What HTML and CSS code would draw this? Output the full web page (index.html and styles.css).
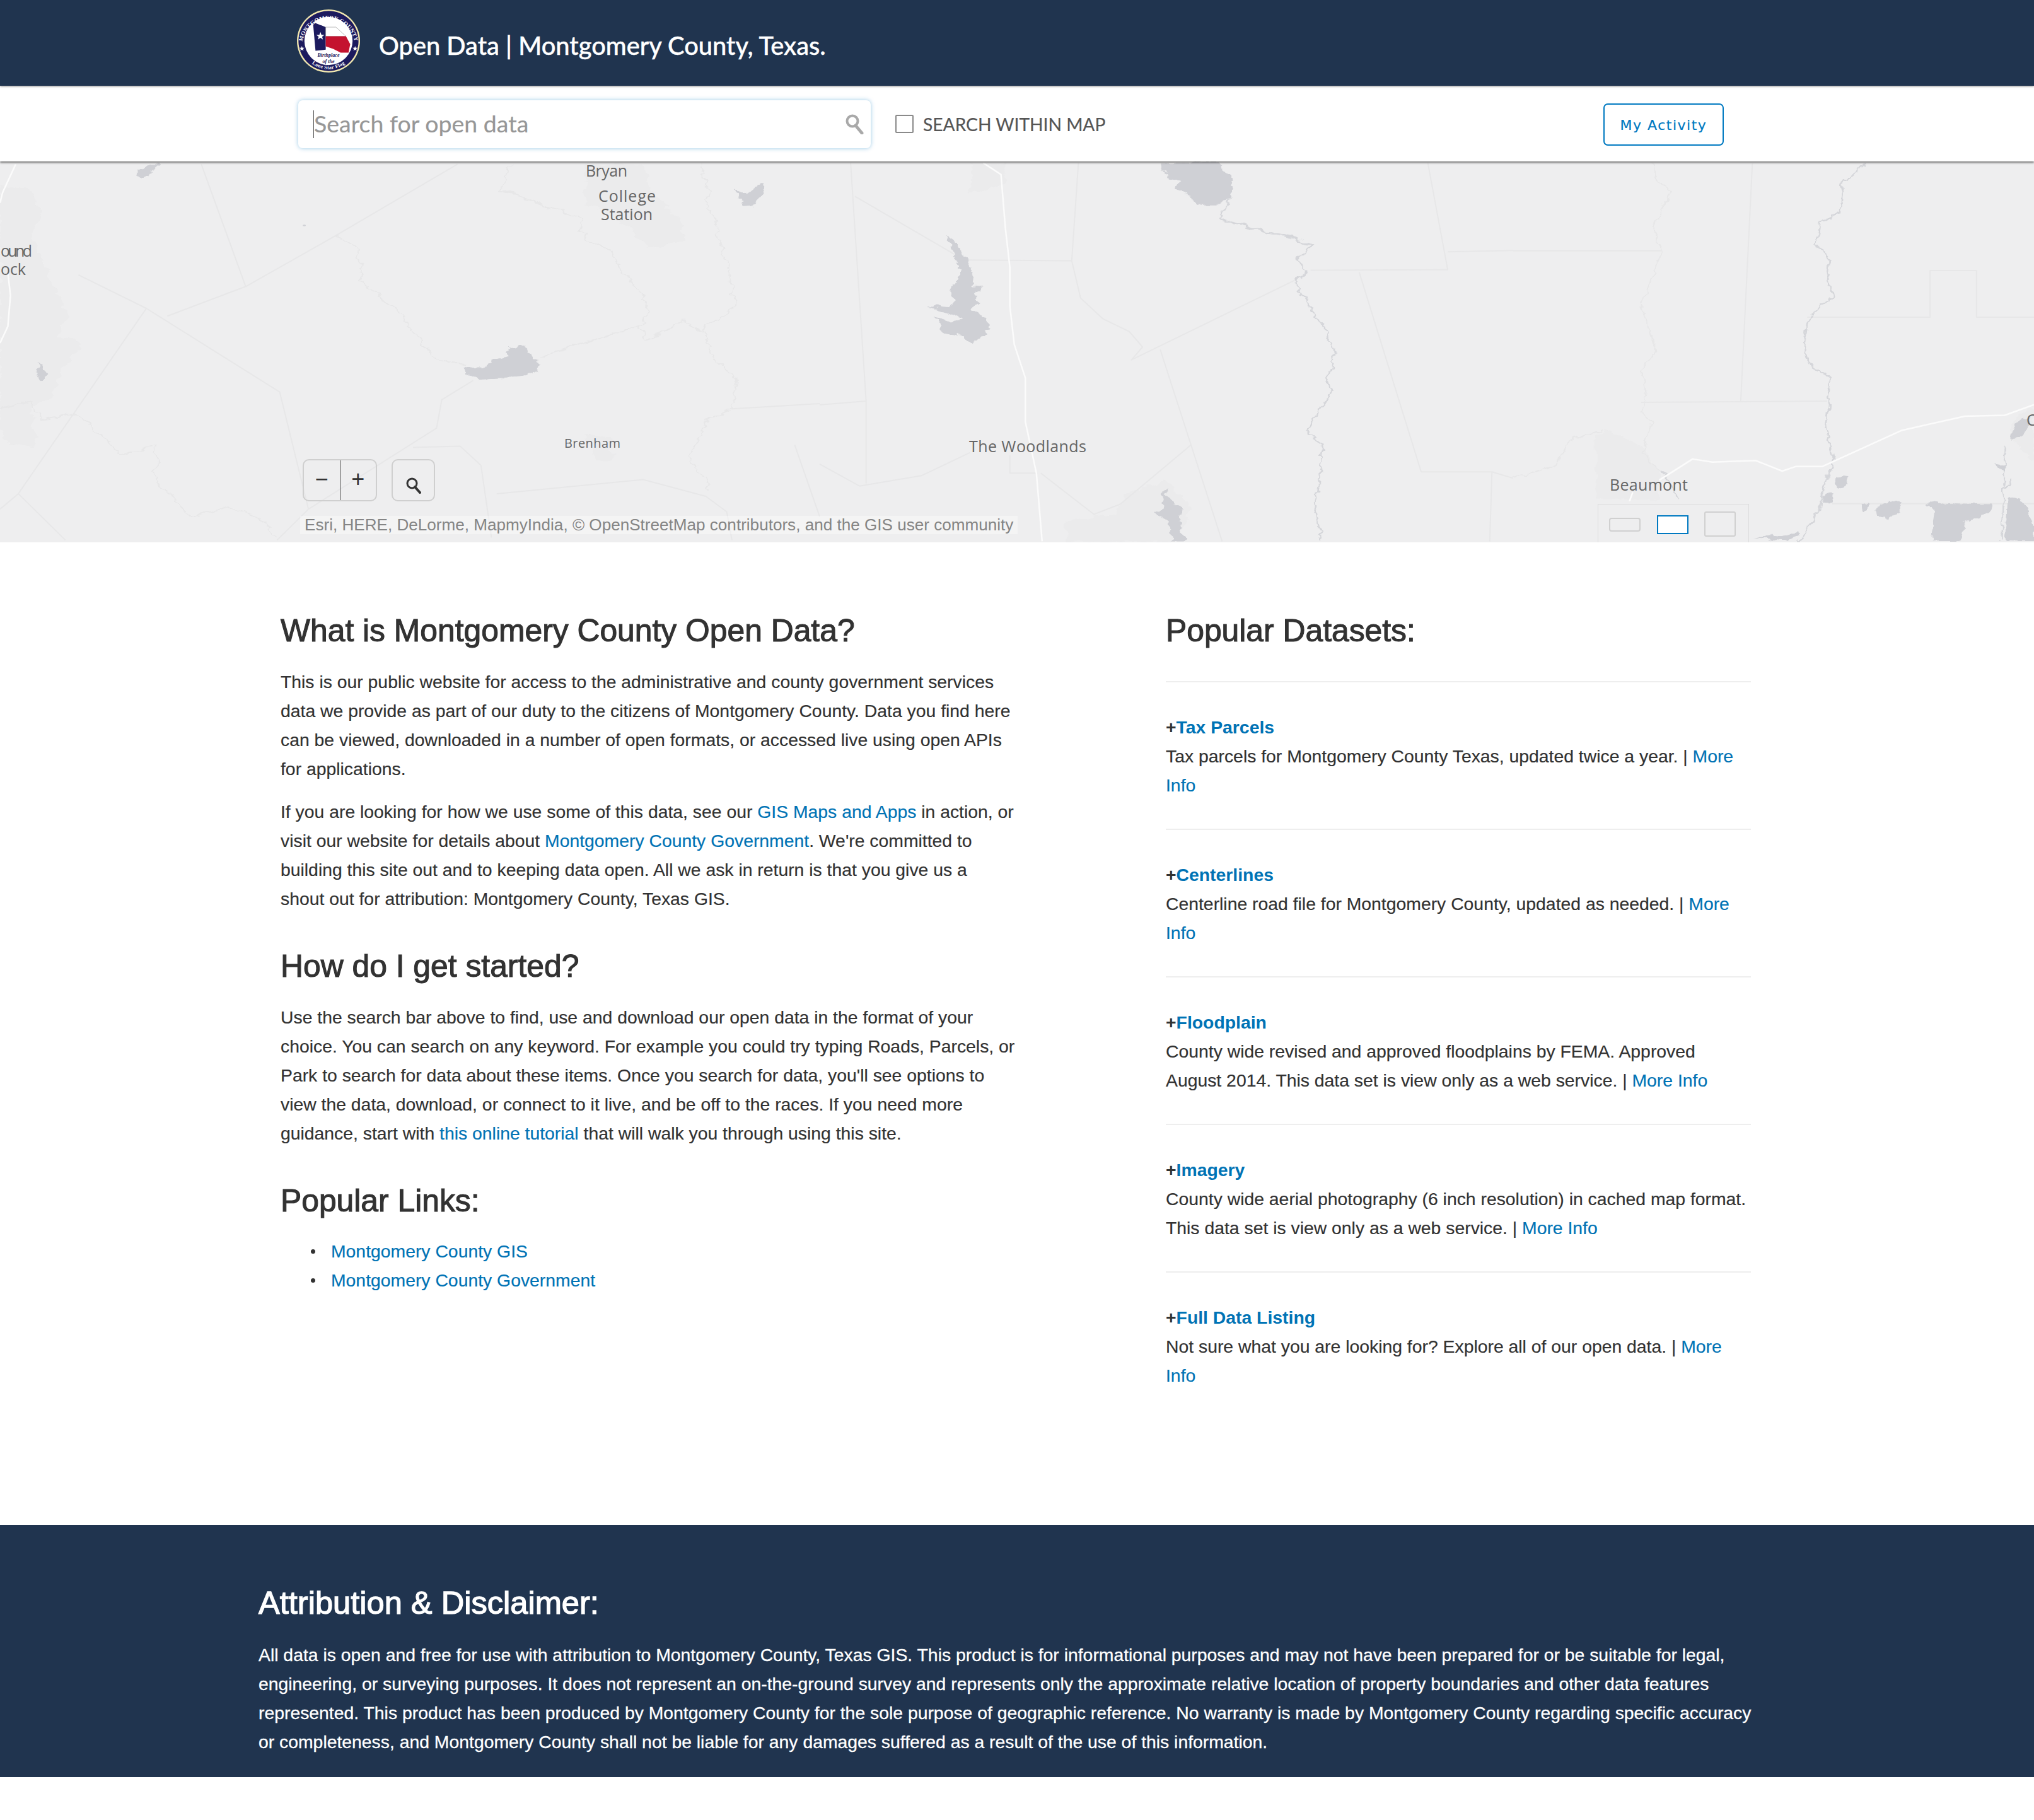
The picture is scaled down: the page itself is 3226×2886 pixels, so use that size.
FILE: index.html
```html
<!DOCTYPE html>
<html lang="en">
<head>
<meta charset="utf-8">
<title>Open Data | Montgomery County, Texas.</title>
<link rel="stylesheet" href="styles.css">
</head>
<body>
<header class="topbar">
  <svg class="seal" viewBox="95 49 296 296" aria-hidden="true">
    <defs>
      <path id="arcTop" d="M120 205 A124 124 0 0 1 366 205"/>
      <path id="arcBot" d="M128 262 A132 132 0 0 0 358 262"/>
    </defs>
    <circle cx="243" cy="197" r="148" fill="#f3e9b0"/>
    <circle cx="243" cy="197" r="141" fill="#1c1a5e"/>
    <circle cx="243" cy="197" r="113" fill="#ffffff"/>
    <polygon points="170,108 230,132 230,238 182,243" fill="#1c1a5e"/>
    <polygon points="230,132 278,132 325,175 230,175" fill="#ffffff" stroke="#777" stroke-width="1.5"/>
    <polygon points="230,175 325,175 345,212 337,252 300,252 265,234 230,222" fill="#c4122f"/>
    <polygon points="205,155 210,168 224,168 213,177 217,190 205,182 193,190 197,177 186,168 200,168" fill="#fff"/>
    <polygon points="118,221 121,229 130,229 123,235 126,243 118,238 110,243 113,235 106,229 115,229" fill="#fff"/>
    <polygon points="368,221 371,229 380,229 373,235 376,243 368,238 360,243 363,235 356,229 365,229" fill="#fff"/>
    <text class="seal-arc"><textPath href="#arcTop" startOffset="50%" text-anchor="middle">MONTGOMERY COUNTY</textPath></text>
    <text class="seal-arc seal-arc-low"><textPath href="#arcBot" startOffset="50%" text-anchor="middle">Lone Star Flag</textPath></text>
    <text class="seal-motto" x="243" y="272">Birthplace</text>
    <text class="seal-motto" x="243" y="300">of the</text>
  </svg>
  <h1 class="site-title">Open Data | Montgomery County, Texas.</h1>
</header>

<div class="searchbar">
  <div class="searchbox">
    <span class="caret"></span>
    <span class="placeholder">Search for open data</span>
    <svg class="search-icon" viewBox="0 0 29 32" aria-hidden="true">
      <circle cx="11" cy="11" r="8.5" fill="none" stroke="#a9a9a9" stroke-width="4"/>
      <path d="M16 18 L26 30" stroke="#a9a9a9" stroke-width="5" stroke-linecap="round"/>
    </svg>
  </div>
  <label class="within"><span class="checkbox"></span>SEARCH WITHIN MAP</label>
  <a class="activity" href="#">My Activity</a>
</div>

<section class="map">
  <svg class="basemap" viewBox="0 256 3226 604" preserveAspectRatio="none" aria-hidden="true">
    <defs>
      <filter id="rough" x="-20%" y="-20%" width="140%" height="140%">
        <feTurbulence type="fractalNoise" baseFrequency=".035" numOctaves="3" seed="7"/>
        <feDisplacementMap in="SourceGraphic" scale="26" xChannelSelector="R" yChannelSelector="G"/>
      </filter>
    </defs>
    <g transform="translate(0 240) scale(.8292 .4082)">
      <path class="urban rough" d="M0 130 L60 150 L80 230 L60 330 L90 470 L130 620 L110 720 L160 740 L120 840 L100 950 L60 1000 L70 1150 L20 1140 L0 1080 Z"/>
      <path class="urban rough" d="M1120 50 L1230 50 L1240 140 L1300 270 L1310 350 L1240 380 L1200 290 L1120 200 Z"/>
      <path class="urban rough" d="M1120 1100 L1170 1110 L1170 1200 L1140 1200 Z"/>
      <path class="line" d="M385 50 L470 525 M875 50 L640 330 L470 525 L320 640 M150 480 L280 610 L535 935 L590 1390 L530 1510 M280 610 L35 1330 L0 1390 M35 1330 L125 1510 M590 1390 L835 1075 L845 965 L905 890 M950 1330 L1230 1275 L1350 1340 L1390 1400 L1400 1510 M790 1150 L880 1145 L920 1220 L940 1500 M1400 1000 L1568 980 M1520 1140 L1568 1420"/>
      <path class="line rough" d="M640 330 L680 370 L695 510 L760 620 L830 800 L890 830 M1030 800 L1220 680 L1245 620 L1170 390 L1115 330 L1110 260 L960 150 L975 50 M1220 680 L1240 730 L1310 660 L1350 710 L1360 800 L1410 890 L1400 1000 L1350 1050 L1320 1180 L1360 1320 M1410 600 L1340 50 M1410 600 L1340 700 M170 1050 L230 1180 L300 1140 L300 1290 L370 1420 L430 1380 L500 1420 L530 1500 M0 1000 L60 970 L80 1040 L150 1020 L170 1050"/>
      <path class="road" d="M30 50 L5 160 L0 200 M15 470 L20 560 L15 680 L0 745"/>
      <path class="water rough" d="M285 50 L310 50 L290 85 L265 105 L258 95 Z"/>
      <path class="water rough" d="M1405 148 L1425 165 L1445 135 L1460 125 L1458 175 L1440 212 L1425 215 L1415 185 Z"/>
      <path class="water rough" d="M890 840 L925 845 L945 810 L975 795 L972 760 L1000 750 L1010 780 L1032 825 L1030 855 L1000 875 L960 880 L915 885 L895 870 Z"/>
      <path class="water rough" d="M75 820 L85 850 L92 870 L78 895 L66 860 Z"/>
      <circle class="water" cx="582" cy="288" r="3"/>
    </g>
    <g transform="translate(1300 240) scale(.7015 .4082)">
      <path class="urban rough" d="M345 50 L420 50 L420 120 L380 150 L340 165 Z"/>
      <path class="urban rough" d="M555 1440 L670 1410 L690 1330 L780 1280 L840 1380 L810 1515 L560 1515 Z"/>
      <path class="line" d="M70 45 L105 970 L105 1290 M0 985 L105 970 M80 175 L305 400 M305 422 L570 425 M585 45 L570 425 L590 570 L640 650 L700 700 L730 760 L705 810 L1075 500 M770 770 L910 1515 M1110 462 L1420 460 L1375 45 M1220 470 L1360 1245 L1520 1245 L1515 1515 M1420 390 L1568 385 M1520 1245 L1568 1270 M840 1140 L680 1370 L620 1410 L500 1250 M0 1215 L90 1300 L230 1260 L340 1170 M430 1180 L430 1250 L490 1250"/>
      <path class="river rough" d="M930 180 L905 260 L1000 310 L1115 360 L1080 420 L1100 470 L1070 510 L1095 570 L1140 680 L1165 760 L1160 840 L1145 880 L1160 930 L1130 1010 L1100 1080 L1135 1140 L1130 1300 L1120 1380 L1135 1515"/>
      <path class="road" d="M370 45 L410 90 L420 300 L430 450 L430 600 L440 750 L465 880 L465 1050 L490 1250 L503 1515"/>
      <path class="water rough" d="M770 45 L905 45 L935 110 L925 185 L895 205 L855 205 L830 170 L805 150 L810 115 L780 90 Z"/>
      <path class="water rough" d="M282 325 L300 340 L325 400 L345 470 L352 490 L345 525 L372 530 L350 550 L365 585 L345 615 L380 650 L375 715 L345 750 L320 715 L285 705 L262 645 L300 665 L320 650 L280 625 L248 600 L295 605 L305 580 L292 525 L315 510 L315 440 L295 360 Z"/>
      <path class="water rough" d="M780 1310 L800 1370 L820 1385 L815 1440 L825 1515 L795 1515 L790 1440 L760 1410 L775 1390 Z"/>
    </g>
    <g transform="translate(2400 130) scale(.5268 .4783)">
      <path class="urban rough" d="M250 1170 L280 1150 L390 1210 L440 1290 L440 1385 L250 1385 Z"/>
      <path class="urban rough" d="M1500 1130 L1540 1090 L1568 1090 L1568 1260 L1500 1180 Z"/>
      <path class="line" d="M720 270 L685 1060 M0 560 L445 560 M385 1062 L945 1058 M885 780 L1255 780 L1255 625 L1395 625 L1395 780 L1568 780 M960 1398 L1568 1398"/>
      <path class="line rough" d="M0 1310 L130 1275 L165 1190 L270 1150 M420 270 L430 320 L475 360 L420 480 L450 560 L385 740 L430 880 L385 960 L400 1030 L385 1090 L415 1130 L390 1230 L445 1290"/>
      <path class="river rough" d="M1065 270 L990 340 L985 430 L925 470 L910 540 L950 580 L945 640 L965 710 L925 740 L885 800 L875 900 L905 950 L955 980 L950 1080 L940 1140 L965 1250 L940 1330 L920 1420 L860 1520"/>
      <path class="river rough" d="M445 1290 L500 1380 M1480 1210 L1470 1520 M1500 1320 L1480 1350"/>
      <path class="road" d="M350 1390 L360 1360 M440 1320 L540 1250 L600 1260 L730 1255 L810 1290 L850 1275 L930 1275 L1170 1155 L1360 1108 L1480 1105 L1568 1070"/>
      <path class="water rough" d="M1240 1395 L1440 1400 L1430 1430 L1360 1460 L1350 1520 L1260 1520 L1270 1420 Z"/>
      <path class="water rough" d="M1092 1410 L1130 1390 L1165 1390 L1165 1425 L1130 1450 L1095 1435 Z"/>
      <path class="water rough" d="M970 1310 L1015 1305 L1000 1340 L975 1345 Z"/>
      <path class="water rough" d="M935 1365 L965 1370 L965 1395 L930 1395 Z"/>
      <path class="water rough" d="M1045 1400 L1075 1395 L1070 1420 L1050 1425 Z"/>
      <path class="water rough" d="M1490 1370 L1530 1385 L1568 1460 L1568 1520 L1480 1520 Z"/>
      <path class="water rough" d="M720 1510 L840 1520 L860 1490 L800 1505 Z"/>
      <path class="water rough" d="M1448 1265 L1475 1270 L1480 1295 Z"/>
      <path class="water rough" d="M1510 1130 L1560 1110 L1560 1140 L1520 1180 L1500 1185 Z"/>
    </g>
    <text class="place" x="929" y="280" textLength="66">Bryan</text>
    <text class="place" x="949" y="320" textLength="91">College</text>
    <text class="place" x="953" y="349" textLength="82">Station</text>
    <text class="place" x="1" y="407" textLength="50">ound</text>
    <text class="place" x="1" y="436" textLength="40">ock</text>
    <text class="place place-sm" x="895" y="710" textLength="89">Brenham</text>
    <text class="place" x="1537" y="717" textLength="186">The Woodlands</text>
    <text class="place" x="2553" y="778" textLength="124">Beaumont</text>
    <text class="place" x="3214" y="675">C</text>
  </svg>

  <div class="zoom-controls">
    <div class="zoom-pair">
      <button class="zoom-btn">&#8722;</button>
      <button class="zoom-btn zoom-plus">+</button>
    </div>
    <button class="zoom-find" aria-label="Find">
      <svg viewBox="0 0 24 26" aria-hidden="true">
        <circle cx="9.5" cy="9.5" r="7.5" fill="none" stroke="#333" stroke-width="3"/>
        <path d="M14 15 L22 24" stroke="#333" stroke-width="4" stroke-linecap="round"/>
      </svg>
    </button>
  </div>
  <div class="attribution">Esri, HERE, DeLorme, MapmyIndia, &#169; OpenStreetMap contributors, and the GIS user community</div>
  <div class="basemap-toggle">
    <span class="bm bm-wide"></span>
    <span class="bm bm-active"></span>
    <span class="bm bm-square"></span>
  </div>
</section>

<main class="content">
  <div class="col-left">
    <h2>What is Montgomery County Open Data?</h2>
    <p>This is our public website for access to the administrative and county government services data we provide as part of our duty to the citizens of Montgomery County. Data you find here can be viewed, downloaded in a number of open formats, or accessed live using open APIs for applications.</p>
    <p>If you are looking for how we use some of this data, see our <a href="#">GIS Maps and Apps</a> in action, or visit our website for details about <a href="#">Montgomery County Government</a>. We're committed to building this site out and to keeping data open. All we ask in return is that you give us a shout out for attribution: Montgomery County, Texas GIS.</p>
    <h2>How do I get started?</h2>
    <p>Use the search bar above to find, use and download our open data in the format of your choice. You can search on any keyword. For example you could try typing Roads, Parcels, or Park to search for data about these items. Once you search for data, you'll see options to view the data, download, or connect to it live, and be off to the races. If you need more guidance, start with <a href="#">this online tutorial</a> that will walk you through using this site.</p>
    <h2>Popular Links:</h2>
    <ul>
      <li><a href="#">Montgomery County GIS</a></li>
      <li><a href="#">Montgomery County Government</a></li>
    </ul>
  </div>
  <div class="col-right">
    <h2>Popular Datasets:</h2>
    <article class="dataset">
      <div class="dataset-title">+<a href="#">Tax Parcels</a></div>
      <div>Tax parcels for Montgomery County Texas, updated twice a year. | <a href="#">More Info</a></div>
    </article>
    <article class="dataset">
      <div class="dataset-title">+<a href="#">Centerlines</a></div>
      <div>Centerline road file for Montgomery County, updated as needed. | <a href="#">More Info</a></div>
    </article>
    <article class="dataset">
      <div class="dataset-title">+<a href="#">Floodplain</a></div>
      <div>County wide revised and approved floodplains by FEMA. Approved August 2014. This data set is view only as a web service. | <a href="#">More Info</a></div>
    </article>
    <article class="dataset">
      <div class="dataset-title">+<a href="#">Imagery</a></div>
      <div>County wide aerial photography (6 inch resolution) in cached map format. This data set is view only as a web service. | <a href="#">More Info</a></div>
    </article>
    <article class="dataset">
      <div class="dataset-title">+<a href="#">Full Data Listing</a></div>
      <div>Not sure what you are looking for? Explore all of our open data. | <a href="#">More Info</a></div>
    </article>
  </div>
</main>

<footer class="disclaimer">
  <h2>Attribution &amp; Disclaimer:</h2>
  <p>All data is open and free for use with attribution to Montgomery County, Texas GIS. This product is for informational purposes and may not have been prepared for or be suitable for legal, engineering, or surveying purposes. It does not represent an on-the-ground survey and represents only the approximate relative location of property boundaries and other data features represented. This product has been produced by Montgomery County for the sole purpose of geographic reference. No warranty is made by Montgomery County regarding specific accuracy or completeness, and Montgomery County shall not be liable for any damages suffered as a result of the use of this information.</p>
</footer>
</body>
</html>
```

FILE: styles.css
```css
* { box-sizing: border-box; }
html, body { margin: 0; padding: 0; background: #fff; }
body {
  min-height: 2886px;
  font-family: "Liberation Sans", Arial, sans-serif;
  font-size: 28.35px;
  line-height: 46px;
  color: #323232;
  -webkit-text-stroke: .2px currentColor;
}
a { color: #0073b5; text-decoration: none; }

/* Top bar */
.topbar {
  height: 136px;
  padding-left: 471px;
  background: #20344f;
  display: flex;
  align-items: center;
  gap: 30px;
  box-shadow: 0 1px 3px rgba(0,0,0,.45);
  position: relative;
  z-index: 3;
}
.seal { width: 100px; height: 100px; margin-top: -6px; flex: none; -webkit-text-stroke: 0; }
.seal-arc { font: bold 27px "Liberation Serif", serif; fill: #fff; letter-spacing: 1px; }
.seal-arc-low { font-size: 24px; }
.seal-motto { font: italic bold 24px "Liberation Serif", serif; fill: #1c1a5e; text-anchor: middle; }
.site-title {
  margin: 7px 0 0;
  font: 500 39.8px/46px Lato, sans-serif;
  -webkit-text-stroke: .4px currentColor;
  color: #fff;
  white-space: nowrap;
}

/* Search bar */
.searchbar {
  height: 120px;
  padding: 0 492px 0 473px;
  background: #fff;
  display: flex;
  align-items: center;
  box-shadow: 0 2px 3px rgba(0,0,0,.55);
  position: relative;
  z-index: 2;
}
.searchbox {
  width: 908px;
  height: 76px;
  margin-top: 2px;
  padding: 0 11px 0 24px;
  border-radius: 7px;
  background: #fff;
  box-shadow: 0 0 7px rgba(0,121,193,.4);
  display: flex;
  align-items: center;
  flex: none;
}
.caret { width: 1px; height: 44px; background: #555; flex: none; }
.placeholder { margin-top: -3px; font: 37.5px/44px Lato, sans-serif; color: #979797; flex: 1; }
.search-icon { width: 29px; height: 32px; flex: none; }
.within {
  margin: 2px 0 0 39px;
  display: flex;
  align-items: center;
  gap: 15px;
  font: 28.2px/36px Lato, sans-serif;
  color: #555;
}
.checkbox { width: 29px; height: 29px; margin-top: -2px; border: 2px solid #8a8a8a; border-radius: 2px; background: #fff; }
.activity {
  margin: 3px 0 0 auto;
  width: 191px;
  height: 67px;
  border: 2px solid #0079c1;
  border-radius: 7px;
  color: #0079c1;
  font: 22px/65px "DejaVu Sans", sans-serif;
  letter-spacing: 1.5px;
  text-align: center;
}

/* Map */
.map { height: 604px; background: #eeeeef; position: relative; overflow: hidden; }
.basemap { width: 3226px; height: 604px; display: block; -webkit-text-stroke: 0; }
.line, .river, .road { fill: none; vector-effect: non-scaling-stroke; stroke-linejoin: round; }
.line { stroke: #e7e7e8; stroke-width: 2; }
.river { stroke: #d5d6da; stroke-width: 2.5; }
.road { stroke: #fbfbfb; stroke-width: 2.5; }
.water { fill: #cfd0d5; }
.urban { fill: #ebebec; }
.rough { filter: url(#rough); }
.place { font: 25px "Open Sans", sans-serif; fill: #666; }
.place-sm { font-size: 20px; }

.zoom-controls {
  position: absolute;
  left: 480px;
  top: 472px;
  display: flex;
  gap: 23px;
}
.zoom-pair {
  width: 118px;
  height: 67px;
  border: 2px solid #cfcfcf;
  border-radius: 10px;
  display: flex;
  overflow: hidden;
}
.zoom-btn {
  flex: 1;
  padding: 0 0 4px;
  border: 0;
  background: transparent;
  font: 36px/1 "Liberation Sans", sans-serif;
  -webkit-text-stroke: 0;
  color: #333;
}
.zoom-plus { border-left: 1px solid #444; }
.zoom-find {
  width: 69px;
  height: 67px;
  padding: 16px 0 0 0;
  border: 2px solid #cfcfcf;
  border-radius: 10px;
  background: transparent;
}
.zoom-find svg { width: 24px; height: 26px; display: block; margin: 0 auto; }
.attribution {
  position: absolute;
  left: 476px;
  top: 562px;
  height: 29px;
  padding: 0 7px;
  background: rgba(255,255,255,.35);
  font-size: 26.1px;
  line-height: 29px;
  color: #858585;
  -webkit-text-stroke: 0;
  white-space: nowrap;
}
.basemap-toggle {
  position: absolute;
  left: 2534px;
  top: 543px;
  width: 240px;
  height: 61px;
  border: 1px solid #dcdcdd;
  border-bottom: 0;
}
.bm { position: absolute; background: #eeeeef; }
.bm-wide { left: 17px; top: 21px; width: 50px; height: 22px; border: 2px solid #d0d0d0; border-radius: 4px; }
.bm-active { left: 93px; top: 17px; width: 50px; height: 30px; border: 2px solid #0079c1; background: #fff; }
.bm-square { left: 168px; top: 11px; width: 50px; height: 40px; border: 2px solid #d0d0d0; border-radius: 3px; }

/* Content */
.content {
  width: 2406px;
  margin: 0 auto;
  padding: 0 0 168px 35px;
  display: grid;
  grid-template-columns: 1165px 928px;
  column-gap: 239px;
  align-items: start;
}
h2 {
  margin: 0;
  font-size: 49.8px;
  line-height: 66px;
  font-weight: 400;
  color: #323232;
  -webkit-text-stroke: 1.1px currentColor;
}
.col-left { padding-top: 107px; }
.col-left h2 { margin: 51px 0 25px; }
.col-left h2:first-child { margin-top: 0; }
.col-left p { margin: 0 0 22px; }
.col-left ul { margin: -1px 0 0; padding: 0 0 0 80px; list-style: none; }
.col-left li { position: relative; }
.col-left li::before {
  content: "";
  position: absolute;
  left: -32px;
  top: 20px;
  width: 7px;
  height: 7px;
  border-radius: 50%;
  background: #323232;
}
.col-right { padding-top: 107px; }
.col-right h2 { margin-bottom: 47px; }
.dataset {
  height: 234px;
  padding-top: 48px;
  border-top: 2px solid #eeeeee;
}
.dataset-title { font-weight: 700; -webkit-text-stroke: 0; }

/* Footer */
.disclaimer {
  height: 400px;
  padding: 91px 436px 0 410px;
  background: #20344f;
  color: #fff;
}
.disclaimer h2 { color: #fff; font-size: 50.6px; margin-bottom: 26px; -webkit-text-stroke: 1.3px currentColor; }
.disclaimer p { margin: 0; -webkit-text-stroke: .3px currentColor; }
```
